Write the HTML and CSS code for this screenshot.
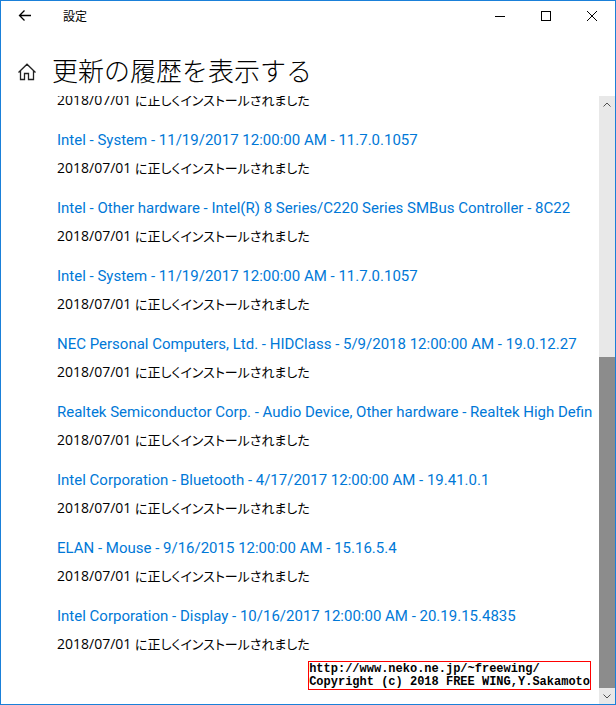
FILE: index.html
```html
<!DOCTYPE html>
<html lang="ja">
<head>
    <meta charset="UTF-8">
    <meta name="viewport" content="width=device-width, initial-scale=1.0">
    <title>設定</title>
    <link rel="stylesheet" href="styles.css">
</head>
<body>
    <div class="window">
        <header class="titlebar">
            <button class="back" aria-label="戻る">
                <svg width="14" height="12" viewBox="0 0 14 12"><path d="M13 5.500H1.500M6.500 .5l-5 5 5 5"/></svg>
            </button>
            <span class="app-name">設定</span>
            <button class="caption" aria-label="最小化">
                <svg width="10" height="10" viewBox="0 0 10 10" shape-rendering="crispEdges"><path d="M0 5.5h10"/></svg>
            </button>
            <button class="caption" aria-label="最大化">
                <svg width="10" height="10" viewBox="0 0 10 10" shape-rendering="crispEdges"><path d="M.5 .5h9v9h-9z"/></svg>
            </button>
            <button class="caption" aria-label="閉じる">
                <svg width="10" height="10" viewBox="0 0 10 10"><path d="M0 0l10 10M10 0L0 10"/></svg>
            </button>
        </header>

        <div class="heading">
            <button class="home" aria-label="ホーム">
                <svg width="18" height="18" viewBox="0 0 18 18"><path d="M.5 9.500L9 1.200l8.500 8.300M2.500 8v8.500h4v-6h4v6h5V8"/></svg>
            </button>
            <h1>更新の履歴を表示する</h1>
        </div>

        <div class="content">
            <ul class="history">
                <li>
                    <p>2018/07/01 <span>に正しくインストールされました</span></p>
                </li>
                <li>
                    <a href="#">Intel - System - 11/19/2017 12:00:00 AM - 11.7.0.1057</a>
                    <p>2018/07/01 <span>に正しくインストールされました</span></p>
                </li>
                <li>
                    <a href="#">Intel - Other hardware - Intel(R) 8 Series/C220 Series SMBus Controller - 8C22</a>
                    <p>2018/07/01 <span>に正しくインストールされました</span></p>
                </li>
                <li>
                    <a href="#">Intel - System - 11/19/2017 12:00:00 AM - 11.7.0.1057</a>
                    <p>2018/07/01 <span>に正しくインストールされました</span></p>
                </li>
                <li>
                    <a href="#">NEC Personal Computers, Ltd. - HIDClass - 5/9/2018 12:00:00 AM - 19.0.12.27</a>
                    <p>2018/07/01 <span>に正しくインストールされました</span></p>
                </li>
                <li>
                    <a href="#">Realtek Semiconductor Corp. - Audio Device, Other hardware - Realtek High Defin</a>
                    <p>2018/07/01 <span>に正しくインストールされました</span></p>
                </li>
                <li>
                    <a href="#">Intel Corporation - Bluetooth - 4/17/2017 12:00:00 AM - 19.41.0.1</a>
                    <p>2018/07/01 <span>に正しくインストールされました</span></p>
                </li>
                <li>
                    <a href="#">ELAN - Mouse - 9/16/2015 12:00:00 AM - 15.16.5.4</a>
                    <p>2018/07/01 <span>に正しくインストールされました</span></p>
                </li>
                <li>
                    <a href="#">Intel Corporation - Display - 10/16/2017 12:00:00 AM - 20.19.15.4835</a>
                    <p>2018/07/01 <span>に正しくインストールされました</span></p>
                </li>
            </ul>
            <div class="scrollbar">
                <button aria-label="上へスクロール">
                    <svg width="8" height="5" viewBox="0 0 8 5"><path d="M.5 4.500L4 1l3.500 3.500"/></svg>
                </button>
                <div class="track"><div class="thumb"></div></div>
                <button aria-label="下へスクロール">
                    <svg width="8" height="5" viewBox="0 0 8 5"><path d="M.5 .5L4 4l3.500-3.500"/></svg>
                </button>
            </div>
        </div>

        <div class="credit">http://www.neko.ne.jp/~freewing/<br>Copyright (c) 2018 FREE WING,Y.Sakamoto</div>
    </div>
</body>
</html>
```

FILE: styles.css
```css
* { box-sizing: border-box; }
body { margin: 0; background: #fff; color: #000; font: 15px/28px Roboto, "Noto Sans CJK JP", sans-serif; }
button { display: flex; align-items: center; justify-content: center; padding: 0; border: 0; background: none; }
svg { display: block; fill: none; stroke: #000; }
h1, p, ul { margin: 0; padding: 0; }

.window { position: relative; display: flex; flex-direction: column; height: 100vh; border: 1px solid #1a80d9; overflow: hidden; }

.titlebar { display: flex; height: 30px; }
.back { width: 48px; }
.back svg { stroke-width: 1.3; }
.app-name { flex: 1; padding-left: 14px; font-size: 12px; line-height: 32px; }
.caption { width: 46px; }

.heading { display: flex; align-items: center; height: 65px; padding: 16px 0 0 17px; }
.home svg { stroke: #222; stroke-width: 1.3; }
h1 { padding: 0 0 4px 16px; font: 300 26px/44px "Noto Sans CJK JP", sans-serif; white-space: nowrap; }

.content { display: flex; flex: 1; min-height: 0; }

/* list is scrolled to its end */
.history { display: flex; flex: 1; flex-direction: column; justify-content: flex-end; gap: 12px; min-width: 0; padding: 0 0 46px 56px; overflow: hidden; list-style: none; white-space: nowrap; }
.history li { flex: none; }
.history a { display: block; color: #0078d7; text-decoration: none; }
.history p { height: 28px; font-family: "Open Sans", "Noto Sans CJK JP", sans-serif; font-size: 14px; }
.history span { font-family: "Noto Sans CJK JP", sans-serif; font-size: 13px; font-feature-settings: "palt"; }

.scrollbar { display: flex; flex: none; flex-direction: column; width: 16px; background: #e8e8e8; }
.scrollbar button { height: 16px; }
.scrollbar svg { stroke: #505050; }
.track { display: flex; flex: 1; flex-direction: column; justify-content: flex-end; }
.thumb { height: 57.5%; background: #8c8c8c; }

.credit { position: absolute; right: 24px; bottom: 14px; padding-top: 1px; border: 1px solid #f00; background: #fff; font: bold 12px/13px "Liberation Mono", monospace; white-space: nowrap; }
```
